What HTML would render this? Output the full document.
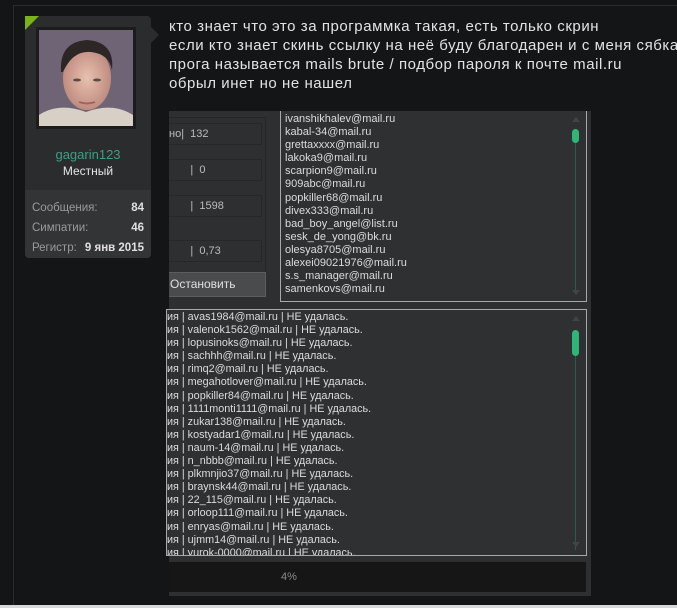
<!DOCTYPE html>
<html><head><meta charset="utf-8"><style>
*{margin:0;padding:0;box-sizing:border-box}
html,body{width:677px;height:608px;overflow:hidden}
body{background:#141516;position:relative;font-family:"Liberation Sans",sans-serif}
.a{position:absolute}
.outer{left:13px;top:5px;width:664px;height:603px;border-top:1px solid #2a2b2d;border-left:1px solid #2a2b2d}
.panel{left:25px;top:16px;width:126px;height:242px;background:#2b2c2e;border-radius:4px}
.pnl2{left:25px;top:190px;width:126px;height:68px;background:#333436;border-radius:0 0 4px 4px}
.post{left:169px;top:17px;color:#e3e3e3;font-size:15px;letter-spacing:0.55px;line-height:19px;white-space:pre}
.mono{font-family:"Liberation Sans",sans-serif;font-size:11px;color:#dcdcdc;white-space:pre}
</style></head><body>
<div class="a outer"></div>
<div class="a panel"></div>
<div class="a" style="left:25px;top:16px;width:0;height:0;border-top:14px solid #7ab317;border-right:14px solid transparent"></div>
<div class="a" style="left:151px;top:27px;width:0;height:0;border-top:8px solid transparent;border-bottom:8px solid transparent;border-left:8px solid #2b2c2e"></div>
<div class="a" style="left:36px;top:27px;width:100px;height:102px;background:#1c1c1c"></div>
<svg class="a" style="left:39px;top:30px" width="94" height="96">
<defs><radialGradient id="f" cx="50%" cy="50%" r="50%"><stop offset="0" stop-color="#e8c1b0"/><stop offset="1" stop-color="#c08c80"/></radialGradient></defs>
<rect width="94" height="96" fill="#6f6476"/>
<path d="M0 96 L0 85 Q20 72 47 82 Q74 72 94 85 L94 96Z" fill="#d8cfc7"/>
<ellipse cx="48" cy="48" rx="24" ry="32" fill="url(#f)"/>
<path d="M22 42 Q20 12 48 10 Q76 12 73 40 Q70 24 52 22 Q34 20 24 42Z" fill="#2c2726"/>
<ellipse cx="38" cy="50" rx="4" ry="1.5" fill="#5a4a48"/><ellipse cx="58" cy="50" rx="4" ry="1.5" fill="#5a4a48"/>
<path d="M40 72 Q48 75 56 72" stroke="#a0645e" stroke-width="2" fill="none"/>
</svg>
<div class="a" style="left:25px;top:147px;width:126px;text-align:center;color:#3f9e86;font-size:13px">gagarin123</div>
<div class="a" style="left:25px;top:164px;width:126px;text-align:center;color:#e6e6e6;font-size:12px">Местный</div>
<div class="a pnl2"></div>
<div class="a" style="left:32px;top:198px;width:112px;font-size:11.5px;color:#9a9a9a;line-height:20px">
<div style="display:flex;justify-content:space-between"><span>Сообщения:</span><b style="color:#e0e0e0">84</b></div>
<div style="display:flex;justify-content:space-between"><span>Симпатии:</span><b style="color:#e0e0e0">46</b></div>
<div style="display:flex;justify-content:space-between"><span>Регистр:</span><b style="color:#e0e0e0">9 янв 2015</b></div></div>
<div class="a post">кто знает что это за программка такая, есть только скрин
если кто знает скинь ссылку на неё буду благодарен и с меня сябка
прога называется mails brute / подбор пароля к почте mail.ru
обрыл инет но не нашел</div>
<div class="a" style="left:169px;top:111px;width:422px;height:485px;background:#2e2f31"></div>
<div class="a" style="left:169px;top:117px;width:97px;height:180px;border:1px solid #252627;border-left:none"></div>
<div class="a mono" style="left:169px;top:123px;width:93px;height:22px;border:1px solid #262728;border-left:none;line-height:20px;color:#bbb">но|  132</div>
<div class="a mono" style="left:169px;top:159px;width:93px;height:22px;border:1px solid #262728;border-left:none;line-height:20px;color:#bbb">       |  0</div>
<div class="a mono" style="left:169px;top:195px;width:93px;height:22px;border:1px solid #262728;border-left:none;line-height:20px;color:#bbb">       |  1598</div>
<div class="a mono" style="left:169px;top:240px;width:93px;height:22px;border:1px solid #262728;border-left:none;line-height:20px;color:#bbb">       |  0,73</div>
<div class="a" style="left:169px;top:272px;width:97px;height:25px;background:#4a4b4d;border:1px solid #5c5d5f;border-left:none;color:#e0e0e0;font-size:12px;line-height:23px;padding-left:1px">Остановить</div>
<div class="a" style="left:280px;top:111px;width:307px;height:191px;border:1px solid #a6a8a9;border-top:none;background:#2f3032"></div>
<div class="a mono" style="left:285px;top:113px;line-height:13.1px;font-size:11px">ivanshikhalev@mail.ru
kabal-34@mail.ru
grettaxxxx@mail.ru
lakoka9@mail.ru
scarpion9@mail.ru
909abc@mail.ru
popkiller68@mail.ru
divex333@mail.ru
bad_boy_angel@list.ru
sesk_de_yong@bk.ru
olesya8705@mail.ru
alexei09021976@mail.ru
s.s_manager@mail.ru
samenkovs@mail.ru</div>
<div class="a" style="left:575px;top:140px;width:1px;height:150px;background:#2d5a4c"></div>
<div class="a" style="left:572px;top:129px;width:7px;height:14px;background:#2fb577;border-radius:4px"></div>
<div class="a" style="left:572px;top:117px;border-left:4px solid transparent;border-right:4px solid transparent;border-bottom:5px solid #444"></div>
<div class="a" style="left:572px;top:290px;border-left:4px solid transparent;border-right:4px solid transparent;border-top:5px solid #444"></div>
<div class="a" style="left:166px;top:309px;width:421px;height:247px;border:1px solid #a6a8a9;background:#2f3032;overflow:hidden">
<div class="mono" style="position:absolute;left:0;top:1px;line-height:13.1px;font-size:10.8px">ия | avas1984@mail.ru | НЕ удалась.
ия | valenok1562@mail.ru | НЕ удалась.
ия | lopusinoks@mail.ru | НЕ удалась.
ия | sachhh@mail.ru | НЕ удалась.
ия | rimq2@mail.ru | НЕ удалась.
ия | megahotlover@mail.ru | НЕ удалась.
ия | popkiller84@mail.ru | НЕ удалась.
ия | 1111monti1111@mail.ru | НЕ удалась.
ия | zukar138@mail.ru | НЕ удалась.
ия | kostyadar1@mail.ru | НЕ удалась.
ия | naum-14@mail.ru | НЕ удалась.
ия | n_nbbb@mail.ru | НЕ удалась.
ия | plkmnjio37@mail.ru | НЕ удалась.
ия | braynsk44@mail.ru | НЕ удалась.
ия | 22_115@mail.ru | НЕ удалась.
ия | orloop111@mail.ru | НЕ удалась.
ия | enryas@mail.ru | НЕ удалась.
ия | ujmm14@mail.ru | НЕ удалась.
ия | yurok-0000@mail.ru | НЕ удалась.</div>
<div style="position:absolute;left:408px;top:20px;width:1px;height:220px;background:#2d5a4c"></div>
<div style="position:absolute;left:405px;top:20px;width:7px;height:26px;background:#2fb577;border-radius:4px"></div>
<div style="position:absolute;left:405px;top:6px;border-left:4px solid transparent;border-right:4px solid transparent;border-bottom:5px solid #444"></div>
<div style="position:absolute;left:405px;top:232px;border-left:4px solid transparent;border-right:4px solid transparent;border-top:5px solid #444"></div>
</div>
<div class="a" style="left:169px;top:562px;width:417px;height:30px;background:#161616;color:#8a8a8a;font-size:11px;line-height:30px;padding-left:112px">4%</div>
<div class="a" style="left:0;top:605px;width:677px;height:3px;background:#d8d8d8"></div>
</body></html>
